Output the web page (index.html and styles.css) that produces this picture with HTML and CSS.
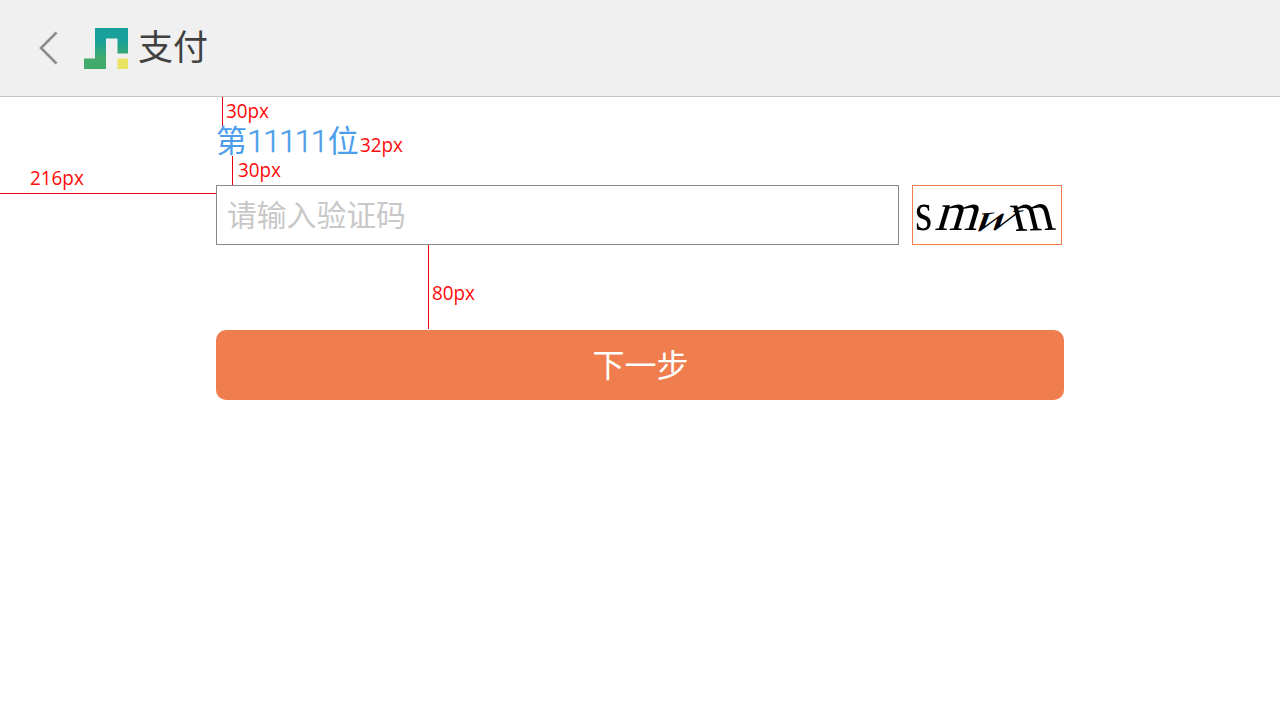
FILE: index.html
```html
<!DOCTYPE html>
<html lang="zh-CN">
<head>
<meta charset="utf-8">
<title>支付</title>
<link rel="stylesheet" href="styles.css">
</head>
<body>
<header class="header">
  <svg class="back" width="20" height="34" viewBox="0 0 20 34"><path d="M18.500 1.500 3 17l15.500 15.500" fill="none" stroke="#8c8c8c" stroke-width="2.600"/></svg>
  <svg class="logo" width="44" height="42" viewBox="0 0 44 42">
    <defs><linearGradient id="g" x1="0" y1="0" x2="0" y2="42" gradientUnits="userSpaceOnUse"><stop offset=".3" stop-color="#1aa09b"/><stop offset=".72" stop-color="#42aa6b"/></linearGradient></defs>
    <path d="M11 0H44V25.500H33.500V10.500H22V41H0V30.500H11Z" fill="url(#g)"/>
    <path d="M33.500 30.500H44V41H33.500Z" fill="#e8e363"/>
  </svg>
  <h1 class="title">支付</h1>
</header>
<main class="content">
  <p class="rank">第<span class="digits">11111</span>位</p>
  <form class="code-row">
    <input class="code" type="text" placeholder="请输入验证码">
    <svg class="captcha" width="150" height="60" viewBox="0 0 150 60">
      <rect x=".5" y=".5" width="149" height="59" fill="#fff" stroke="#f07d4e"/>
      <g class="captcha-text">
        <text transform="matrix(.82 0 0 1 3 45)">s</text>
        <text transform="matrix(1.020 0 -.3 1 22 45)">m</text>
        <text transform="matrix(1.080 -.08 -.65 .75 54 47)">w</text>
        <text transform="matrix(1 -.03 .25 1.020 103 46)">m</text>
      </g>
    </svg>
  </form>
  <button class="next" type="button">下一步</button>
</main>
<span class="rule top"></span><span class="note n-top">30px</span>
<span class="note n-size">32px</span>
<span class="rule mid"></span><span class="note n-mid">30px</span>
<span class="rule left"></span><span class="note n-left">216px</span>
<span class="rule gap"></span><span class="note n-gap">80px</span>
</body>
</html>
```
FILE: styles.css
```css
* { box-sizing: border-box; }
body { margin: 0; background: #fff; font-family: "Noto Sans CJK SC", sans-serif; }
.header { display: flex; align-items: center; height: 97px; padding-left: 38px; background: #f0f0f0; border-bottom: 1px solid #c4c4c4; }
.logo { margin: 1px 0 0 26px; }
.title { margin: -6px 0 0 10px; font-size: 35px; line-height: 50px; font-weight: 400; color: #404040; }
.content { width: 848px; margin-left: 216px; padding-top: 26px; }
.rank { margin: 0; height: 62px; font-size: 31px; line-height: 32px; font-weight: 400; color: #4c9eed; }
.digits { display: inline-block; height: 32px; margin: 0 1px 0 0; vertical-align: top; font: 300 32px/36px Roboto, sans-serif; letter-spacing: -1.800px; -webkit-text-stroke: .4px #4c9eed; }
.code-row { display: flex; gap: 13px; margin: 0; }
.code { width: 683px; height: 60px; padding: 0 10px 4px; border: 1px solid #888; font: 400 29.800px "Noto Sans CJK SC", sans-serif; }
.code::placeholder { color: #c8c8c8; opacity: 1; }
.captcha-text { font: 54px "Liberation Serif", serif; }
.next { display: block; width: 848px; height: 70px; margin-top: 85px; padding: 0 0 4px 1px; border: 0; border-radius: 10px; background: #f07d4e; color: #fff; font: 400 32px "Noto Sans CJK SC", sans-serif; }
.rule { position: absolute; background: #e60012; }
.top { left: 222px; top: 97px; width: 1px; height: 29px; }
.mid { left: 232px; top: 156px; width: 1px; height: 29px; }
.left { left: 0; top: 193px; width: 216px; height: 1px; }
.gap { left: 428px; top: 245px; width: 1px; height: 84px; }
.note { position: absolute; color: #ff0a0a; font: 400 20.500px/22px "Open Sans", sans-serif; transform: scaleX(.92); transform-origin: left; }
.n-top { left: 226px; top: 99px; }
.n-size { left: 360px; top: 133px; }
.n-mid { left: 238px; top: 158px; }
.n-left { left: 30px; top: 166px; }
.n-gap { left: 432px; top: 281px; }
```
